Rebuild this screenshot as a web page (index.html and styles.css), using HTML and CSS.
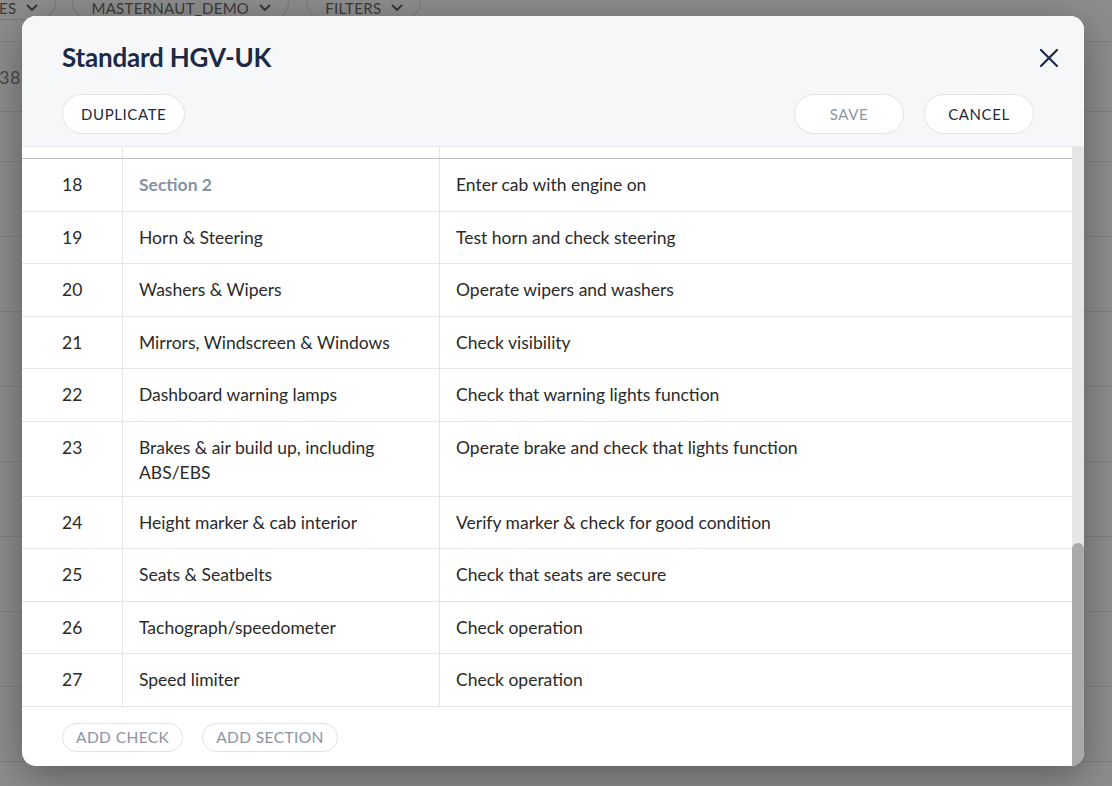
FILE: index.html
```html
<!DOCTYPE html>
<html>
<head>
<meta charset="utf-8">
<link rel="stylesheet" href="styles.css">
</head>
<body>
<div class="page">
  <div class="topbar">
    <span class="pill pill-a">ES <svg class="chev" width="12" height="8" viewBox="0 0 12 8"><path d="M1.5 1.5 L6 6 L10.5 1.5" stroke="#3a3a3a" stroke-width="2" fill="none" stroke-linecap="round" stroke-linejoin="round"/></svg></span>
    <span class="pill pill-b">MASTERNAUT_DEMO <svg class="chev" width="12" height="8" viewBox="0 0 12 8"><path d="M1.5 1.5 L6 6 L10.5 1.5" stroke="#3a3a3a" stroke-width="2" fill="none" stroke-linecap="round" stroke-linejoin="round"/></svg></span>
    <span class="pill pill-c">FILTERS <svg class="chev" width="12" height="8" viewBox="0 0 12 8"><path d="M1.5 1.5 L6 6 L10.5 1.5" stroke="#3a3a3a" stroke-width="2" fill="none" stroke-linecap="round" stroke-linejoin="round"/></svg></span>
  </div>
  <div class="bgrow bg-first"><span class="bgnum">38</span></div>
  <div class="bgrow bg-second"></div>
  <div class="bgrow"></div>
  <div class="bgrow"></div>
  <div class="bgrow"></div>
  <div class="bgrow"></div>
  <div class="bgrow"></div>
  <div class="bgrow"></div>
  <div class="bgrow"></div>
  <div class="bgrow"></div>
</div>

<div class="modal">
  <div class="mhead">
    <div class="titlerow">
      <h1 class="title">Standard HGV-UK</h1>
      <svg class="close" width="20" height="20" viewBox="0 0 20 20"><path d="M2 2 L18 18 M18 2 L2 18" stroke="#1c2b45" stroke-width="2.2" stroke-linecap="round" fill="none"/></svg>
    </div>
    <div class="btnrow">
      <button class="btn">DUPLICATE</button>
      <div class="spacer"></div>
      <button class="btn btn-disabled">SAVE</button>
      <button class="btn">CANCEL</button>
    </div>
  </div>
  <div class="mbody">
    <div class="content">
      <div class="row partial"><div class="c1"></div><div class="c2"></div><div class="c3"></div></div>
      <div class="row section"><div class="c1">18</div><div class="c2 sec">Section 2</div><div class="c3">Enter cab with engine on</div></div>
      <div class="row"><div class="c1">19</div><div class="c2">Horn &amp; Steering</div><div class="c3">Test horn and check steering</div></div>
      <div class="row"><div class="c1">20</div><div class="c2">Washers &amp; Wipers</div><div class="c3">Operate wipers and washers</div></div>
      <div class="row"><div class="c1">21</div><div class="c2">Mirrors, Windscreen &amp; Windows</div><div class="c3">Check visibility</div></div>
      <div class="row"><div class="c1">22</div><div class="c2">Dashboard warning lamps</div><div class="c3">Check that warning lights function</div></div>
      <div class="row"><div class="c1">23</div><div class="c2">Brakes &amp; air build up, including ABS/EBS</div><div class="c3">Operate brake and check that lights function</div></div>
      <div class="row"><div class="c1">24</div><div class="c2">Height marker &amp; cab interior</div><div class="c3">Verify marker &amp; check for good condition</div></div>
      <div class="row"><div class="c1">25</div><div class="c2">Seats &amp; Seatbelts</div><div class="c3">Check that seats are secure</div></div>
      <div class="row"><div class="c1">26</div><div class="c2">Tachograph/speedometer</div><div class="c3">Check operation</div></div>
      <div class="row"><div class="c1">27</div><div class="c2">Speed limiter</div><div class="c3">Check operation</div></div>
      <div class="footer">
        <button class="sbtn">ADD CHECK</button>
        <button class="sbtn">ADD SECTION</button>
      </div>
    </div>
    <div class="scrollbar"><div class="track"></div><div class="thumb"></div></div>
  </div>
</div>
</body>
</html>
```
FILE: styles.css
```css
* { box-sizing: border-box; }
html, body { margin: 0; padding: 0; }
body {
  width: 1112px;
  height: 786px;
  overflow: hidden;
  background: #8d8d8d;
  font-family: "Lato", "Open Sans", sans-serif;
  position: relative;
}
.page { width: 1112px; }
.topbar {
  height: 42px;
  border-bottom: 1px solid #7f7f7f;
  display: flex;
  align-items: flex-start;
}
.pill {
  display: flex;
  align-items: center;
  gap: 10px;
  height: 24px;
  margin-top: -4px;
  padding: 0 17px 0 18px;
  border: 1px solid #7c7c7c;
  border-radius: 0 0 18px 18px;
  border-top: none;
  color: #3a3a3a;
  font-size: 15px;
  letter-spacing: 0.3px;
  flex: none;
  white-space: nowrap;
}
.chev { display: block; margin-top: 1px; flex: none; }
.pill-a { margin-left: -20px; }
.pill-b { margin-left: 16px; }
.pill-c { margin-left: 17px; }
.bgrow {
  height: 75px;
  border-bottom: 1px solid #7f7f7f;
}
.bg-first { height: 70px; display: flex; align-items: center; }
.bg-second { height: 50px; }
.bgnum { color: #4a4a4a; font-size: 18px; margin-left: -1px; letter-spacing: 0.5px; }

.modal {
  position: absolute;
  left: 22px;
  top: 16px;
  width: 1062px;
  height: 750px;
  background: #ffffff;
  border-radius: 14px;
  overflow: hidden;
  display: flex;
  flex-direction: column;
  box-shadow: 0 10px 40px rgba(0,0,0,0.35);
}
.mhead {
  height: 131px;
  flex: none;
  background: #f6f7f9;
  border-bottom: 1px solid #e8eaee;
  padding: 25px 0 0 40px;
}
.titlerow {
  display: flex;
  align-items: center;
  justify-content: space-between;
  padding-right: 25px;
  height: 32px;
}
.title {
  margin: 0;
  font-family: "Lato", sans-serif;
  font-weight: 700;
  font-size: 26px;
  color: #1c2b45;
  letter-spacing: -0.2px;
}
.close { display: block; margin-top: 1px; }
.btnrow {
  display: flex;
  align-items: center;
  gap: 20px;
  margin-top: 21px;
  padding-right: 50px;
}
.spacer { flex: 1; }
.btn {
  height: 40px;
  min-width: 110px;
  padding: 0 18px;
  border: 1px solid #dfe2e7;
  background: #ffffff;
  border-radius: 20px;
  font-family: "Lato", sans-serif;
  font-size: 15px;
  letter-spacing: 0.6px;
  color: #1f2a3a;
}
.btn-disabled { color: #8c96a4; }
.mbody {
  flex: 1;
  display: flex;
  min-height: 0;
}
.content {
  width: 1050px;
  display: flex;
  flex-direction: column;
}
.row {
  display: flex;
  min-height: 52.5px;
  border-bottom: 1px solid #e3e5e8;
  font-size: 17.5px;
  line-height: 25px;
  color: #2a2a2a;
}
.row.partial { min-height: 0; height: 12px; border-bottom: 1px solid #bdc0c4; }
.c1 { width: 100px; padding: 13px 0 11px 40px; flex: none; }
.c2 { width: 317px; padding: 13px 30px 11px 16px; flex: none; border-left: 1px solid #e3e5e8; }
.c3 { flex: 1; padding: 13px 16px 11px; border-left: 1px solid #e3e5e8; }
.partial .c1, .partial .c2, .partial .c3 { padding: 0; }
.sec { color: #8792a2; font-weight: 700; }
.footer {
  display: flex;
  gap: 19px;
  padding: 16px 0 0 40px;
}
.sbtn {
  height: 29px;
  padding: 0 13px;
  border: 1px solid #dfe2e7;
  background: #ffffff;
  border-radius: 15px;
  font-family: "Lato", sans-serif;
  font-size: 15.5px;
  letter-spacing: 0.4px;
  color: #8a94a6;
}
.scrollbar {
  width: 12px;
  flex: none;
  display: flex;
  flex-direction: column;
  background: #e6e6e6;
}
.track { flex: 1; }
.thumb {
  height: 223px;
  background: #a9a9a9;
  border-radius: 6px 6px 0 0;
}
```
